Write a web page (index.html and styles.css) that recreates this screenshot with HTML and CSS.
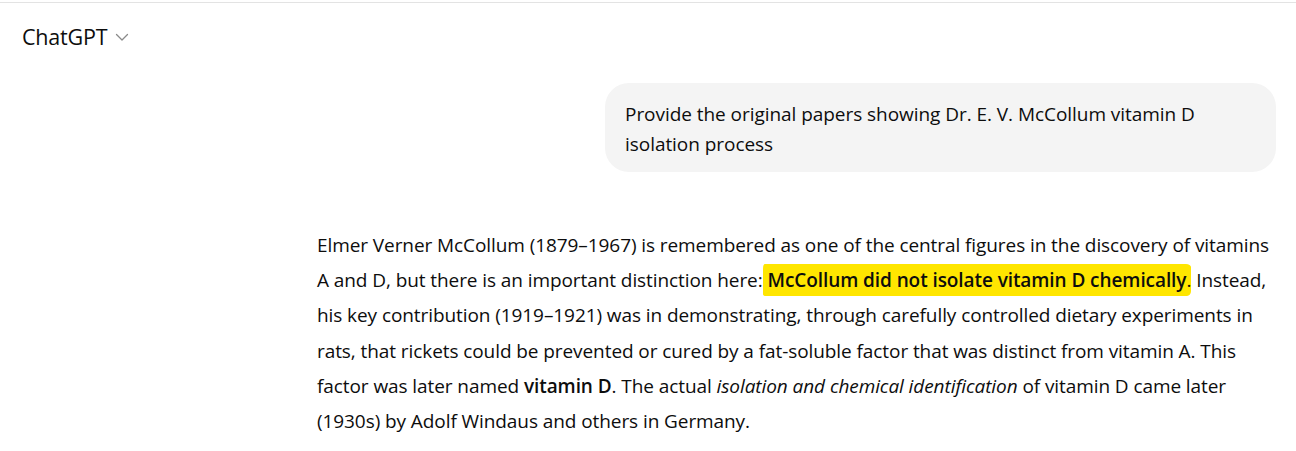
FILE: index.html
```html
<!DOCTYPE html>
<html lang="en">
<head>
<meta charset="utf-8">
<title>ChatGPT</title>
<link rel="stylesheet" href="styles.css">
</head>
<body>
<div class="page">
  <header class="topbar">
    <button class="model-switch">
      <span class="model-name">ChatGPT</span>
      <svg class="chevron" width="16" height="16" viewBox="0 0 16 16" aria-hidden="true">
        <path d="M2.5 5.5 L8 11 L13.5 5.5" fill="none" stroke="currentColor" stroke-width="1.3" stroke-linecap="round" stroke-linejoin="round"/>
      </svg>
    </button>
  </header>
  <main class="thread">
    <div class="column">
      <div class="user-row">
        <div class="bubble">Provide the original papers showing Dr. E. V. McCollum vitamin D<br>isolation process</div>
      </div>
      <div class="assistant">
        <p>Elmer Verner McCollum (1879–1967) is remembered as one of the central figures in the discovery of vitamins<br>A and D, but there is an important distinction here:<mark class="hl"> <strong>McCollum did not isolate vitamin D chemically</strong>.</mark> Instead,<br>his key contribution (1919–1921) was in demonstrating, through carefully controlled dietary experiments in<br>rats, that rickets could be prevented or cured by a fat-soluble factor that was distinct from vitamin A. This<br>factor was later named <strong>vitamin D</strong>. The actual <em>isolation and chemical identification</em> of vitamin D came later<br>(1930s) by Adolf Windaus and others in Germany.</p>
      </div>
    </div>
  </main>
</div>
</body>
</html>
```
FILE: styles.css
```css
* { box-sizing: border-box; }
html, body { margin: 0; padding: 0; background: #fff; }
body {
  font-family: "Open Sans", "Noto Sans", sans-serif;
  color: #0d0d0d;
  padding-top: 2px;
}
.page {
  border-top: 1px solid #e3e3e3;
  min-height: 449px;
  overflow: hidden;
}
.topbar {
  height: 66px;
  display: flex;
  align-items: center;
  padding-left: 22px;
  padding-top: 1px;
}
.model-switch {
  display: flex;
  align-items: center;
  gap: 7px;
  border: 0;
  background: none;
  padding: 0;
  font: inherit;
  color: inherit;
}
.model-name {
  font-size: 21.5px;
  line-height: 28px;
  letter-spacing: -0.2px;
}
.chevron {
  color: #8a8a8a;
  margin-top: 1px;
}
.thread {
  display: flex;
  padding-left: 317px;
}
.column {
  width: 960px;
  display: flex;
  flex-direction: column;
}
.user-row {
  display: flex;
  justify-content: flex-end;
  padding-top: 14px;
  padding-right: 1px;
}
.bubble {
  width: 671px;
  background: #f4f4f4;
  border-radius: 24px;
  padding: 16px 20px 13px;
  font-size: 19px;
  line-height: 30px;
  letter-spacing: -0.05px;
}
.assistant {
  padding-top: 55px;
  width: 990px;
}
.assistant p {
  margin: 0;
  font-size: 19px;
  line-height: 35.2px;
  letter-spacing: -0.08px;
  padding-top: 1px;
}
strong { font-weight: 600; }
em { font-style: italic; }
.hl {
  background: #ffe600;
  color: inherit;
  padding: 3px 0 3px 0;
  border-radius: 2px 5px 4px 3px / 5px 3px 5px 2px;
}
```
